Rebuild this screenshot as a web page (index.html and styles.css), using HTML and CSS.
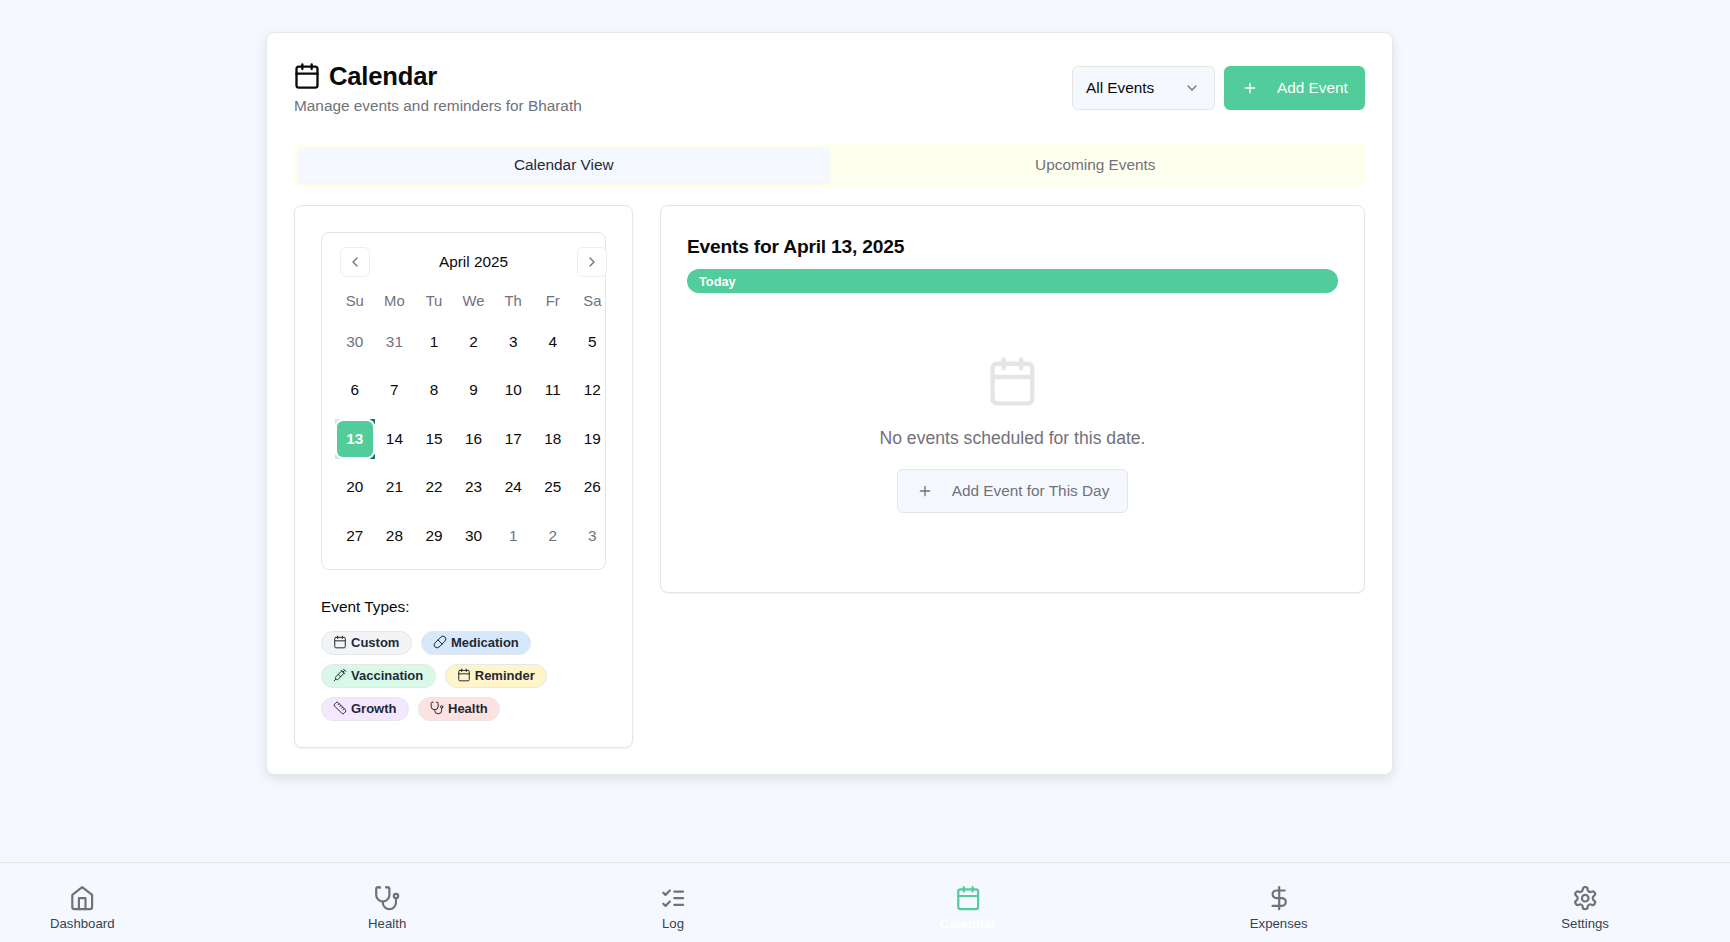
FILE: index.html

```html
<!DOCTYPE html>
<html lang="en">
<head>
  <meta charset="UTF-8">
  <title>Calendar</title>
  <meta name="viewport" content="width=device-width, initial-scale=1.0"/>
  <link rel="stylesheet" href="styles.css">
</head>
<body>
  <svg class="sprite" width="0" height="0" aria-hidden="true">
    <symbol id="i-calendar" viewBox="0 0 24 24"><rect x="3" y="4" width="18" height="18" rx="2"/><path d="M16 2v4M8 2v4M3 10h18"/></symbol>
    <symbol id="i-plus" viewBox="0 0 24 24"><path d="M5 12h14M12 5v14"/></symbol>
    <symbol id="i-down" viewBox="0 0 24 24"><path d="m6 9 6 6 6-6"/></symbol>
    <symbol id="i-left" viewBox="0 0 24 24"><path d="m15 18-6-6 6-6"/></symbol>
    <symbol id="i-right" viewBox="0 0 24 24"><path d="m9 18 6-6-6-6"/></symbol>
    <symbol id="i-pill" viewBox="0 0 24 24"><path d="m10.5 20.5 10-10a4.95 4.95 0 1 0-7-7l-10 10a4.95 4.95 0 1 0 7 7Z"/><path d="m8.5 8.5 7 7"/></symbol>
    <symbol id="i-syringe" viewBox="0 0 24 24"><path d="m18 2 4 4M17 7l3-3M19 9 8.7 19.3c-1 1-2.5 1-3.4 0l-.6-.6c-1-1-1-2.5 0-3.4L15 5M9 11l4 4M5 19l-3 3M14 4l6 6"/></symbol>
    <symbol id="i-ruler" viewBox="0 0 24 24"><path d="M21.3 15.3a2.4 2.4 0 0 1 0 3.4l-2.6 2.6a2.4 2.4 0 0 1-3.4 0L2.7 8.7a2.41 2.41 0 0 1 0-3.4l2.6-2.6a2.41 2.41 0 0 1 3.4 0Z"/><path d="m14.5 12.5 2-2M11.5 9.5l2-2M8.5 6.5l2-2M17.5 15.5l2-2"/></symbol>
    <symbol id="i-stethoscope" viewBox="0 0 24 24"><path d="M4.8 2.3A.3.3 0 1 0 5 2H4a2 2 0 0 0-2 2v5a6 6 0 0 0 6 6 6 6 0 0 0 6-6V4a2 2 0 0 0-2-2h-1a.2.2 0 1 0 .3.3"/><path d="M8 15v1a6 6 0 0 0 6 6 6 6 0 0 0 6-6v-4"/><circle cx="20" cy="10" r="2"/></symbol>
    <symbol id="i-home" viewBox="0 0 24 24"><path d="m3 9 9-7 9 7v11a2 2 0 0 1-2 2H5a2 2 0 0 1-2-2z"/><path d="M9 22V12h6v10"/></symbol>
    <symbol id="i-checks" viewBox="0 0 24 24"><path d="m3 17 2 2 4-4M3 7l2 2 4-4M13 6h8M13 12h8M13 18h8"/></symbol>
    <symbol id="i-dollar" viewBox="0 0 24 24"><path d="M12 2v20M17 5H9.5a3.5 3.5 0 0 0 0 7h5a3.5 3.5 0 0 1 0 7H6"/></symbol>
    <symbol id="i-settings" viewBox="0 0 24 24"><path d="M12.22 2h-.44a2 2 0 0 0-2 2v.18a2 2 0 0 1-1 1.73l-.43.25a2 2 0 0 1-2 0l-.15-.08a2 2 0 0 0-2.73.73l-.22.38a2 2 0 0 0 .73 2.73l.15.1a2 2 0 0 1 1 1.72v.51a2 2 0 0 1-1 1.74l-.15.09a2 2 0 0 0-.73 2.73l.22.38a2 2 0 0 0 2.73.73l.15-.08a2 2 0 0 1 2 0l.43.25a2 2 0 0 1 1 1.73V20a2 2 0 0 0 2 2h.44a2 2 0 0 0 2-2v-.18a2 2 0 0 1 1-1.73l.43-.25a2 2 0 0 1 2 0l.15.08a2 2 0 0 0 2.73-.73l.22-.39a2 2 0 0 0-.73-2.73l-.15-.08a2 2 0 0 1-1-1.74v-.5a2 2 0 0 1 1-1.74l.15-.09a2 2 0 0 0 .73-2.73l-.22-.38a2 2 0 0 0-2.73-.73l-.15.08a2 2 0 0 1-2 0l-.43-.25a2 2 0 0 1-1-1.73V4a2 2 0 0 0-2-2z"/><circle cx="12" cy="12" r="3"/></symbol>
  </svg>

  <main class="page">
    <section class="card">
      <header class="head">
        <div>
          <h1 class="title"><svg class="icon icon-title"><use href="#i-calendar"/></svg>Calendar</h1>
          <p class="subtitle">Manage events and reminders for Bharath</p>
        </div>
        <div class="actions">
          <div class="select">All Events<svg class="icon icon-chevron"><use href="#i-down"/></svg></div>
          <button class="btn btn-primary"><svg class="icon icon-plus"><use href="#i-plus"/></svg>Add Event</button>
        </div>
      </header>

      <div class="tabs">
        <div class="tab tab-active">Calendar View</div>
        <div class="tab">Upcoming Events</div>
      </div>

      <div class="columns">
        <div class="panel panel-left">
          <div class="month">
            <div class="month-nav">
              <button class="nav-btn"><svg class="icon icon-nav"><use href="#i-left"/></svg></button>
              <span class="month-name">April 2025</span>
              <button class="nav-btn"><svg class="icon icon-nav"><use href="#i-right"/></svg></button>
            </div>
            <div class="weekdays">
              <span>Su</span><span>Mo</span><span>Tu</span><span>We</span><span>Th</span><span>Fr</span><span>Sa</span>
            </div>
            <div class="days">
              <span class="day other">30</span><span class="day other">31</span><span class="day">1</span><span class="day">2</span><span class="day">3</span><span class="day">4</span><span class="day">5</span>
              <span class="day">6</span><span class="day">7</span><span class="day">8</span><span class="day">9</span><span class="day">10</span><span class="day">11</span><span class="day">12</span>
              <span class="day selected"><b>13</b></span><span class="day">14</span><span class="day">15</span><span class="day">16</span><span class="day">17</span><span class="day">18</span><span class="day">19</span>
              <span class="day">20</span><span class="day">21</span><span class="day">22</span><span class="day">23</span><span class="day">24</span><span class="day">25</span><span class="day">26</span>
              <span class="day">27</span><span class="day">28</span><span class="day">29</span><span class="day">30</span><span class="day other">1</span><span class="day other">2</span><span class="day other">3</span>
            </div>
          </div>

          <h4 class="types-title">Event Types:</h4>
          <div class="types">
            <span class="pill pill-custom"><svg class="icon icon-pill"><use href="#i-calendar"/></svg>Custom</span>
            <span class="pill pill-medication"><svg class="icon icon-pill"><use href="#i-pill"/></svg>Medication</span>
            <span class="pill pill-vaccination"><svg class="icon icon-pill"><use href="#i-syringe"/></svg>Vaccination</span>
            <span class="pill pill-reminder"><svg class="icon icon-pill"><use href="#i-calendar"/></svg>Reminder</span>
            <span class="pill pill-growth"><svg class="icon icon-pill"><use href="#i-ruler"/></svg>Growth</span>
            <span class="pill pill-health"><svg class="icon icon-pill"><use href="#i-stethoscope"/></svg>Health</span>
          </div>
        </div>

        <div class="panel panel-right">
          <h3 class="events-title">Events for April 13, 2025</h3>
          <div class="today">Today</div>
          <div class="empty">
            <svg class="icon icon-empty"><use href="#i-calendar"/></svg>
            <p class="empty-text">No events scheduled for this date.</p>
            <button class="btn btn-outline"><svg class="icon icon-plus"><use href="#i-plus"/></svg>Add Event for This Day</button>
          </div>
        </div>
      </div>
    </section>
  </main>

  <nav class="bottom-nav">
    <a class="nav-item"><svg class="icon icon-bar"><use href="#i-home"/></svg>Dashboard</a>
    <a class="nav-item"><svg class="icon icon-bar"><use href="#i-stethoscope"/></svg>Health</a>
    <a class="nav-item"><svg class="icon icon-bar"><use href="#i-checks"/></svg>Log</a>
    <a class="nav-item nav-active"><svg class="icon icon-bar"><use href="#i-calendar"/></svg>Calendar</a>
    <a class="nav-item"><svg class="icon icon-bar"><use href="#i-dollar"/></svg>Expenses</a>
    <a class="nav-item"><svg class="icon icon-bar"><use href="#i-settings"/></svg>Settings</a>
  </nav>
</body>
</html>
```

FILE: styles.css

```css
* {
  box-sizing: border-box;
}
body {
  margin: 0;
  min-height: 100vh;
  display: flex;
  flex-direction: column;
  font-family: "Liberation Sans", Arial, sans-serif;
  font-size: 15.36px;
  background-color: #f5f9ff;
  color: #0a0a0a;
}
button {
  font-family: inherit;
}
.sprite {
  display: block;
}
.icon {
  fill: none;
  stroke: currentColor;
  stroke-width: 2;
  stroke-linecap: round;
  stroke-linejoin: round;
  flex-shrink: 0;
}
.page {
  flex: 1;
  padding: 32px 0 0 266px;
}
.card {
  width: 1127px;
  padding: 27px 27px 26px;
  background-color: #fff;
  border: 1px solid #e5e7eb;
  border-radius: 8px;
  box-shadow: 0 4px 12px rgba(0,0,0,0.1);
}
.head {
  display: flex;
  justify-content: space-between;
  align-items: flex-start;
  margin-bottom: 25px;
}
.title {
  display: flex;
  align-items: center;
  gap: 8px;
  margin: 0 0 2px;
  font-size: 25.6px;
  line-height: 32px;
  letter-spacing: -0.2px;
}
.icon-title {
  width: 28px;
  height: 28px;
  margin-left: -1px;
}
.subtitle {
  margin: 0;
  line-height: 24px;
  color: #71717a;
}
.actions {
  display: flex;
  gap: 9px;
  margin-top: 6px;
}
.select {
  display: flex;
  align-items: center;
  justify-content: space-between;
  width: 143px;
  height: 44px;
  padding: 0 14px 0 13px;
  background-color: #f5f9ff;
  border: 1px solid #e5e5e5;
  border-radius: 6px;
}
.icon-chevron {
  width: 16px;
  height: 16px;
  color: #71717a;
}
.btn {
  display: flex;
  align-items: center;
  gap: 19px;
  height: 44px;
  font-size: 15.36px;
  white-space: nowrap;
  border-radius: 6px;
}
.icon-plus {
  width: 16px;
  height: 16px;
}
.btn-primary {
  width: 141px;
  padding: 0 17px 0 18px;
  color: #fff;
  background-color: #52cc9a;
  border: none;
}
.btn-outline {
  padding: 0 18px 0 19px;
  color: #71717a;
  background-color: #f5f9ff;
  border: 1px solid #e5e5e5;
}
.tabs {
  display: grid;
  grid-template-columns: 1fr 1fr;
  height: 44px;
  padding: 4px;
  margin-bottom: 18px;
  background-color: #fffff0;
  border-radius: 6px;
}
.tab {
  display: flex;
  align-items: center;
  justify-content: center;
  color: #71717a;
  border-radius: 4px;
}
.tab-active {
  color: #1f2937;
  background-color: #f5f9ff;
  box-shadow: 0 1px 2px rgba(0,0,0,0.05);
}
.columns {
  display: grid;
  grid-template-columns: 339px 1fr;
  gap: 27px;
  align-items: start;
}
.panel {
  background-color: #fff;
  border: 1px solid #e5e5e5;
  border-radius: 8px;
  box-shadow: 0 1px 2px rgba(0,0,0,0.05);
}
.panel-left {
  padding: 26px;
}
.month {
  height: 338px;
  padding: 14px 13px;
  border: 1px solid #e5e5e5;
  border-radius: 8px;
}
.month-nav {
  display: flex;
  align-items: center;
  justify-content: space-between;
  width: 267px;
  margin-left: 5px;
}
.nav-btn {
  display: flex;
  align-items: center;
  justify-content: center;
  width: 30px;
  height: 30px;
  padding: 0;
  color: #71717a;
  background-color: #fff;
  border: 1px solid #eeeeee;
  border-radius: 6px;
}
.icon-nav {
  width: 16px;
  height: 16px;
}
.weekdays,
.days {
  display: grid;
  grid-template-columns: repeat(7, 39.6px);
  text-align: center;
}
.weekdays {
  margin-top: 14px;
  font-size: 14.8px;
  line-height: 20px;
  color: #71717a;
}
.days {
  grid-auto-rows: 48.4px;
  margin-top: 6.75px;
}
.day {
  display: flex;
  align-items: center;
  justify-content: center;
}
.other {
  color: #71717a;
}
/* leftover corners of the focus ring around the selected day */
.selected {
  background:
    linear-gradient(#0f766e, #0f766e) right 0 top 4px / 5px 5px no-repeat,
    linear-gradient(#0f766e, #0f766e) right 0 bottom 4px / 5px 5px no-repeat,
    linear-gradient(#cfe9e0, #cfe9e0) left 0 top 4px / 5px 5px no-repeat,
    linear-gradient(#cfe9e0, #cfe9e0) left 0 bottom 4px / 5px 5px no-repeat;
}
.selected b {
  display: flex;
  align-items: center;
  justify-content: center;
  width: 36px;
  height: 36px;
  color: #fff;
  background-color: #52cc9a;
  border-radius: 6px;
  box-shadow: 0 0 0 2px #fff;
}
.types-title {
  margin: 27px 0 14px;
  font-size: 15.36px;
  font-weight: normal;
  line-height: 20px;
}
.types {
  display: flex;
  flex-wrap: wrap;
  gap: 9px;
}
.pill {
  display: flex;
  align-items: center;
  gap: 4px;
  height: 24px;
  padding: 0 11.5px 2px 11px;
  font-size: 13px;
  font-weight: bold;
  color: #1f2937;
  border: 1px solid #e5e7eb;
  border-radius: 12px;
}
.icon-pill {
  width: 14px;
  height: 14px;
  stroke-width: 1.7;
}
.pill-custom { background-color: #f3f4f6; }
.pill-medication { background-color: #d6e8fb; }
.pill-vaccination { background-color: #d9f9e8; }
.pill-reminder { background-color: #fff5c8; }
.pill-growth { background-color: #f3e8ff; }
.pill-health { background-color: #fee2e2; }
.panel-right {
  height: 388px;
  padding: 27px 26px 26px;
}
.events-title {
  margin: 0 0 8px;
  font-size: 19.2px;
  line-height: 28px;
  letter-spacing: -0.2px;
}
.today {
  height: 24px;
  padding: 0 12px;
  font-size: 12.8px;
  font-weight: bold;
  line-height: 25px;
  color: #fff;
  background-color: #52cc9a;
  border-radius: 12px;
}
.empty {
  display: flex;
  flex-direction: column;
  align-items: center;
  margin-top: 61.6px;
}
.icon-empty {
  width: 52.8px;
  height: 52.8px;
  color: #e5e5e5;
}
.empty-text {
  margin: 16.6px 0 17px;
  font-size: 17.6px;
  line-height: 28px;
  color: #71717a;
}
.bottom-nav {
  display: flex;
  justify-content: space-between;
  height: 80px;
  padding: 22px 121px 0 50px;
  border-top: 1px solid #e5e5e5;
}
.nav-item {
  display: flex;
  flex-direction: column;
  align-items: center;
  gap: 4.6px;
  font-size: 13.2px;
  line-height: 16px;
  color: #374151;
}
.icon-bar {
  width: 26.4px;
  height: 26.4px;
  color: #71717a;
}
.nav-active {
  font-weight: bold;
  color: #fff;
}
.nav-active .icon-bar {
  color: #52cc9a;
}
```
